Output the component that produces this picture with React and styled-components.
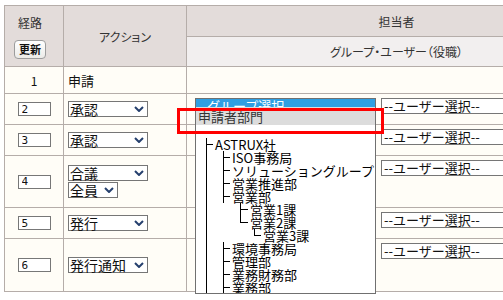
import React from 'react';
import styled, { createGlobalStyle } from 'styled-components';

const GlobalStyle = createGlobalStyle`
  html, body {
    margin: 0;
    padding: 0;
    background: #fff;
    overflow: hidden;
  }
  body {
    font-family: "Noto Sans CJK JP", "Noto Sans", sans-serif;
    color: #111;
  }
`;

const Page = styled.div`
  position: relative;
  width: 503px;
  height: 300px;
  overflow: hidden;
  padding: 5px 0 0 4px;
  box-sizing: border-box;
`;

const Table = styled.table`
  border-collapse: collapse;
  table-layout: fixed;
  width: 602px;
  font-size: 12px;

  th, td {
    border: 1px solid #b5ada9;
    padding: 0;
  }
`;

const Col = styled.col`
  width: ${p => p.$w}px;
`;

const HeadCell = styled.th`
  background: #e3dcda;
  color: #333;
  font-weight: normal;
  font-size: 12px;
  font-feature-settings: "palt";
  text-align: center;
  vertical-align: middle;
  padding-right: ${p => (p.$shift ? 8 : 0)}px !important;
`;

const SubHeadCell = styled.th`
  background: #f2efef;
  color: #333;
  font-weight: normal;
  font-size: 12px;
  font-feature-settings: "palt";
  text-align: center;
`;

const Refresh = styled.button`
  display: block;
  margin: 9px auto 0;
  width: 32px;
  height: 19px;
  padding: 0;
  border: 1px solid #9c9c9c;
  border-radius: 4px;
  background: linear-gradient(#ffffff, #ecebe8);
  font-family: inherit;
  font-size: 11px;
  font-weight: bold;
  color: #111;
  line-height: 17px;
`;

const Row = styled.tr`
  height: ${p => p.$h}px;
  background: #fffdf7;
`;

const NumCell = styled.td`
  text-align: center;
  vertical-align: middle;
`;

const ActionCell = styled.td`
  vertical-align: middle;
  padding-left: 4px !important;
  font-size: 13px;
`;

const AssignCell = styled.td`
  vertical-align: top;
  padding: 4px 0 0 8px !important;
`;

const OrderInput = styled.input`
  display: block;
  margin: 0 auto;
  box-sizing: border-box;
  width: 33px;
  height: 14px;
  border: 1px solid #777;
  padding: 0 0 0 3px;
  font-family: "DejaVu Sans Mono", monospace;
  font-size: 11px;
  line-height: 12px;
  color: #111;
  background: #fff;
`;

const SelectStack = styled.div`
  display: flex;
  flex-direction: column;
  gap: 1px;
`;

const SelectBox = styled.div`
  display: flex;
  align-items: center;
  justify-content: space-between;
  box-sizing: border-box;
  width: ${p => p.$w}px;
  height: 16px;
  border: 1px solid #767676;
  background: #fff;
  padding: 0 3px 0 1px;
  font-size: 14px;
  line-height: 14px;
  color: #111;
  white-space: nowrap;
`;

const Chevron = () => (
  <svg width="10" height="6" viewBox="0 0 10 6">
    <path d="M1 1 L5 5 L9 1" fill="none" stroke="#26406e" strokeWidth="2" />
  </svg>
);

const PickerRow = styled.div`
  display: flex;
  gap: 6px;
`;

const Picker = styled.div`
  box-sizing: border-box;
  flex: none;
  width: ${p => p.$w}px;
  height: 16px;
  border: 1px solid #767676;
  background: #fff;
  padding-left: 2px;
  font-size: 13px;
  line-height: 14px;
  color: #111;
  white-space: nowrap;
  overflow: hidden;
`;

const ListBox = styled.div`
  position: absolute;
  left: 195px;
  top: 98px;
  width: 181px;
  height: 196px;
  box-sizing: border-box;
  border: 1px solid #707070;
  background: #fff;
  overflow: hidden;
  z-index: 1;
  font-size: 13px;
  white-space: nowrap;
`;

const HighlightItem = styled.div`
  height: 8px;
  line-height: 13px;
  padding-left: 2px;
  background: #2f9fe2;
  color: #fff;
  overflow: hidden;
`;

const SelfItem = styled.div`
  height: 18px;
  line-height: 20px;
  padding-left: 2px;
  background: #dcdcdc;
  color: #333;
`;

const BlankItem = styled.div`
  height: 13px;
`;

const Tree = styled.div`
  margin-left: 10px;
  border-left: 1px solid #000;
`;

const TreeRow = styled.div`
  display: flex;
  height: 13px;
  line-height: 13px;
  padding-left: ${p => p.$pad}px;
  color: #000;
`;

const Branch = styled.span`
  flex: none;
  width: ${p => p.$w}px;
  height: 13px;
  background:
    ${p => (p.$kind === 'stub' ? 'none' : 'linear-gradient(#000, #000)')} 0 0 / 1px ${p => (p.$kind === 'end' ? 7 : 13)}px no-repeat,
    linear-gradient(#000, #000) 0 6px / ${p => p.$w - 2}px 1px no-repeat;
`;

const Highlight = styled.div`
  position: absolute;
  left: 177px;
  top: 108px;
  width: 207px;
  height: 26px;
  box-sizing: border-box;
  border: 3px solid #ff0000;
  z-index: 2;
`;

const levels = {
  1: { pad: 0, w: 8, kind: 'stub' },
  2: { pad: 16, w: 9, kind: 'tee' },
  3: { pad: 33, w: 10, kind: 'tee' },
  4: { pad: 47, w: 9, kind: 'end' },
};

const groups = [
  { name: 'ASTRUX社', level: 1 },
  { name: 'ISO事務局', level: 2 },
  { name: 'ソリューショングループ', level: 2 },
  { name: '営業推進部', level: 2 },
  { name: '営業部', level: 2 },
  { name: '営業1課', level: 3 },
  { name: '営業2課', level: 3, kind: 'end' },
  { name: '営業3課', level: 4 },
  { name: '環境事務局', level: 2 },
  { name: '管理部', level: 2 },
  { name: '業務財務部', level: 2 },
  { name: '業務部', level: 2 },
  { name: '総務部', level: 2 },
];

const steps = [
  { no: 2, h: 31, actions: [{ label: '承認', w: 80 }] },
  { no: 3, h: 31, actions: [{ label: '承認', w: 80 }] },
  { no: 4, h: 52, actions: [{ label: '合議', w: 80 }, { label: '全員', w: 50 }] },
  { no: 5, h: 31, actions: [{ label: '発行', w: 80 }] },
  { no: 6, h: 53, actions: [{ label: '発行通知', w: 80 }] },
];

function App() {
  return (
    <Page>
      <GlobalStyle />
      <Table>
        <colgroup>
          <Col $w={59} />
          <Col $w={123} />
          <Col $w={420} />
        </colgroup>
        <thead>
          <tr style={{ height: 31 }}>
            <HeadCell rowSpan={2} $shift>
              経路
              <Refresh type="button">更新</Refresh>
            </HeadCell>
            <HeadCell rowSpan={2}>アクション</HeadCell>
            <HeadCell>担当者</HeadCell>
          </tr>
          <tr style={{ height: 30 }}>
            <SubHeadCell>グループ・ユーザー（役職）</SubHeadCell>
          </tr>
        </thead>
        <tbody>
          <Row $h={27}>
            <NumCell>1</NumCell>
            <ActionCell>申請</ActionCell>
            <AssignCell />
          </Row>
          {steps.map(step => (
            <Row key={step.no} $h={step.h}>
              <NumCell>
                <OrderInput readOnly defaultValue={step.no} />
              </NumCell>
              <ActionCell>
                <SelectStack>
                  {step.actions.map(a => (
                    <SelectBox key={a.label} $w={a.w}>
                      {a.label}
                      <Chevron />
                    </SelectBox>
                  ))}
                </SelectStack>
              </ActionCell>
              <AssignCell>
                <PickerRow>
                  <Picker $w={180}>--グループ選択--</Picker>
                  <Picker $w={140}>--ユーザー選択--</Picker>
                </PickerRow>
              </AssignCell>
            </Row>
          ))}
        </tbody>
      </Table>

      <ListBox>
        <HighlightItem>--グループ選択--</HighlightItem>
        <SelfItem>申請者部門</SelfItem>
        <BlankItem />
        <Tree>
          {groups.map(g => {
            const lv = levels[g.level];
            return (
              <TreeRow key={g.name} $pad={lv.pad}>
                <Branch $w={lv.w} $kind={g.kind || lv.kind} />
                {g.name}
              </TreeRow>
            );
          })}
        </Tree>
      </ListBox>
      <Highlight />
    </Page>
  );
}

export default App;
